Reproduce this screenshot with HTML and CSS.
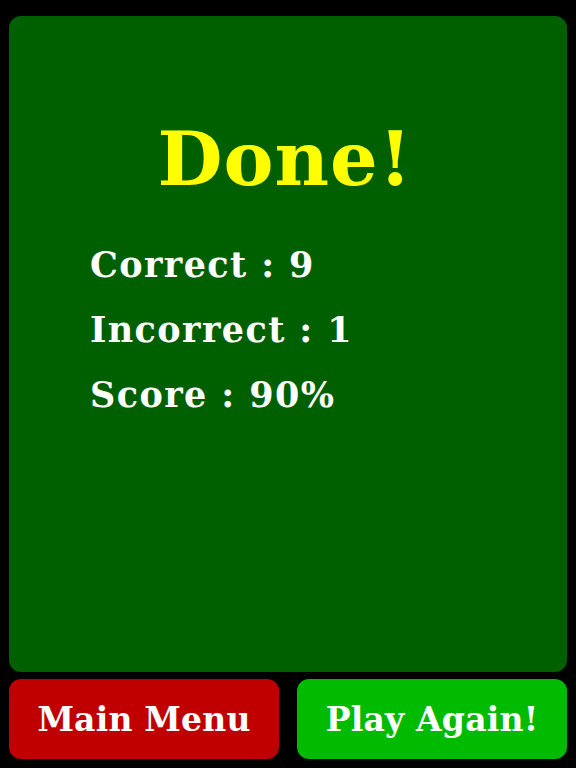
FILE: index.html
```html
<!DOCTYPE html>
<html>
<head>
<meta charset="utf-8">
<link rel="stylesheet" href="styles.css">
</head>
<body>
<div class="screen">
  <main class="panel">
    <h1 class="title">Done!</h1>
    <div class="stats">
      <p class="stat">Correct : 9</p>
      <p class="stat">Incorrect : 1</p>
      <p class="stat">Score : 90%</p>
    </div>
  </main>
  <div class="buttons">
    <button class="btn btn-menu">Main Menu</button>
    <button class="btn btn-again">Play Again!</button>
  </div>
</div>
</body>
</html>
```
FILE: styles.css
```css
html, body {
  margin: 0;
  padding: 0;
  background: #000;
}
.screen {
  width: 576px;
  height: 768px;
  box-sizing: border-box;
  padding: 16px 9px 9px 9px;
  display: flex;
  flex-direction: column;
  gap: 7px;
  font-family: "DejaVu Serif", "Liberation Serif", serif;
  font-weight: bold;
}
.panel {
  height: 656px;
  background: #006000;
  border-radius: 12px;
  box-sizing: border-box;
  padding-top: 98px;
  display: flex;
  flex-direction: column;
}
.title {
  margin: 0;
  text-align: center;
  color: #ffff00;
  font-size: 75px;
  line-height: 90px;
  letter-spacing: 1px;
  padding-right: 6px;
}
.stats {
  margin-top: 28px;
  padding-left: 81px;
  display: flex;
  flex-direction: column;
}
.stat {
  margin: 0;
  color: #fff;
  font-size: 35px;
  line-height: 65px;
  letter-spacing: 1.4px;
}
.buttons {
  display: flex;
  gap: 18px;
  height: 80px;
}
.btn {
  flex: 1;
  border: none;
  border-radius: 12px;
  color: #fff;
  font-family: inherit;
  font-weight: bold;
  font-size: 33px;
  letter-spacing: 0.2px;
  padding: 0;
  margin: 0;
}
.btn-menu { background: #c00000; }
.btn-again { background: #00bb00; }
```
